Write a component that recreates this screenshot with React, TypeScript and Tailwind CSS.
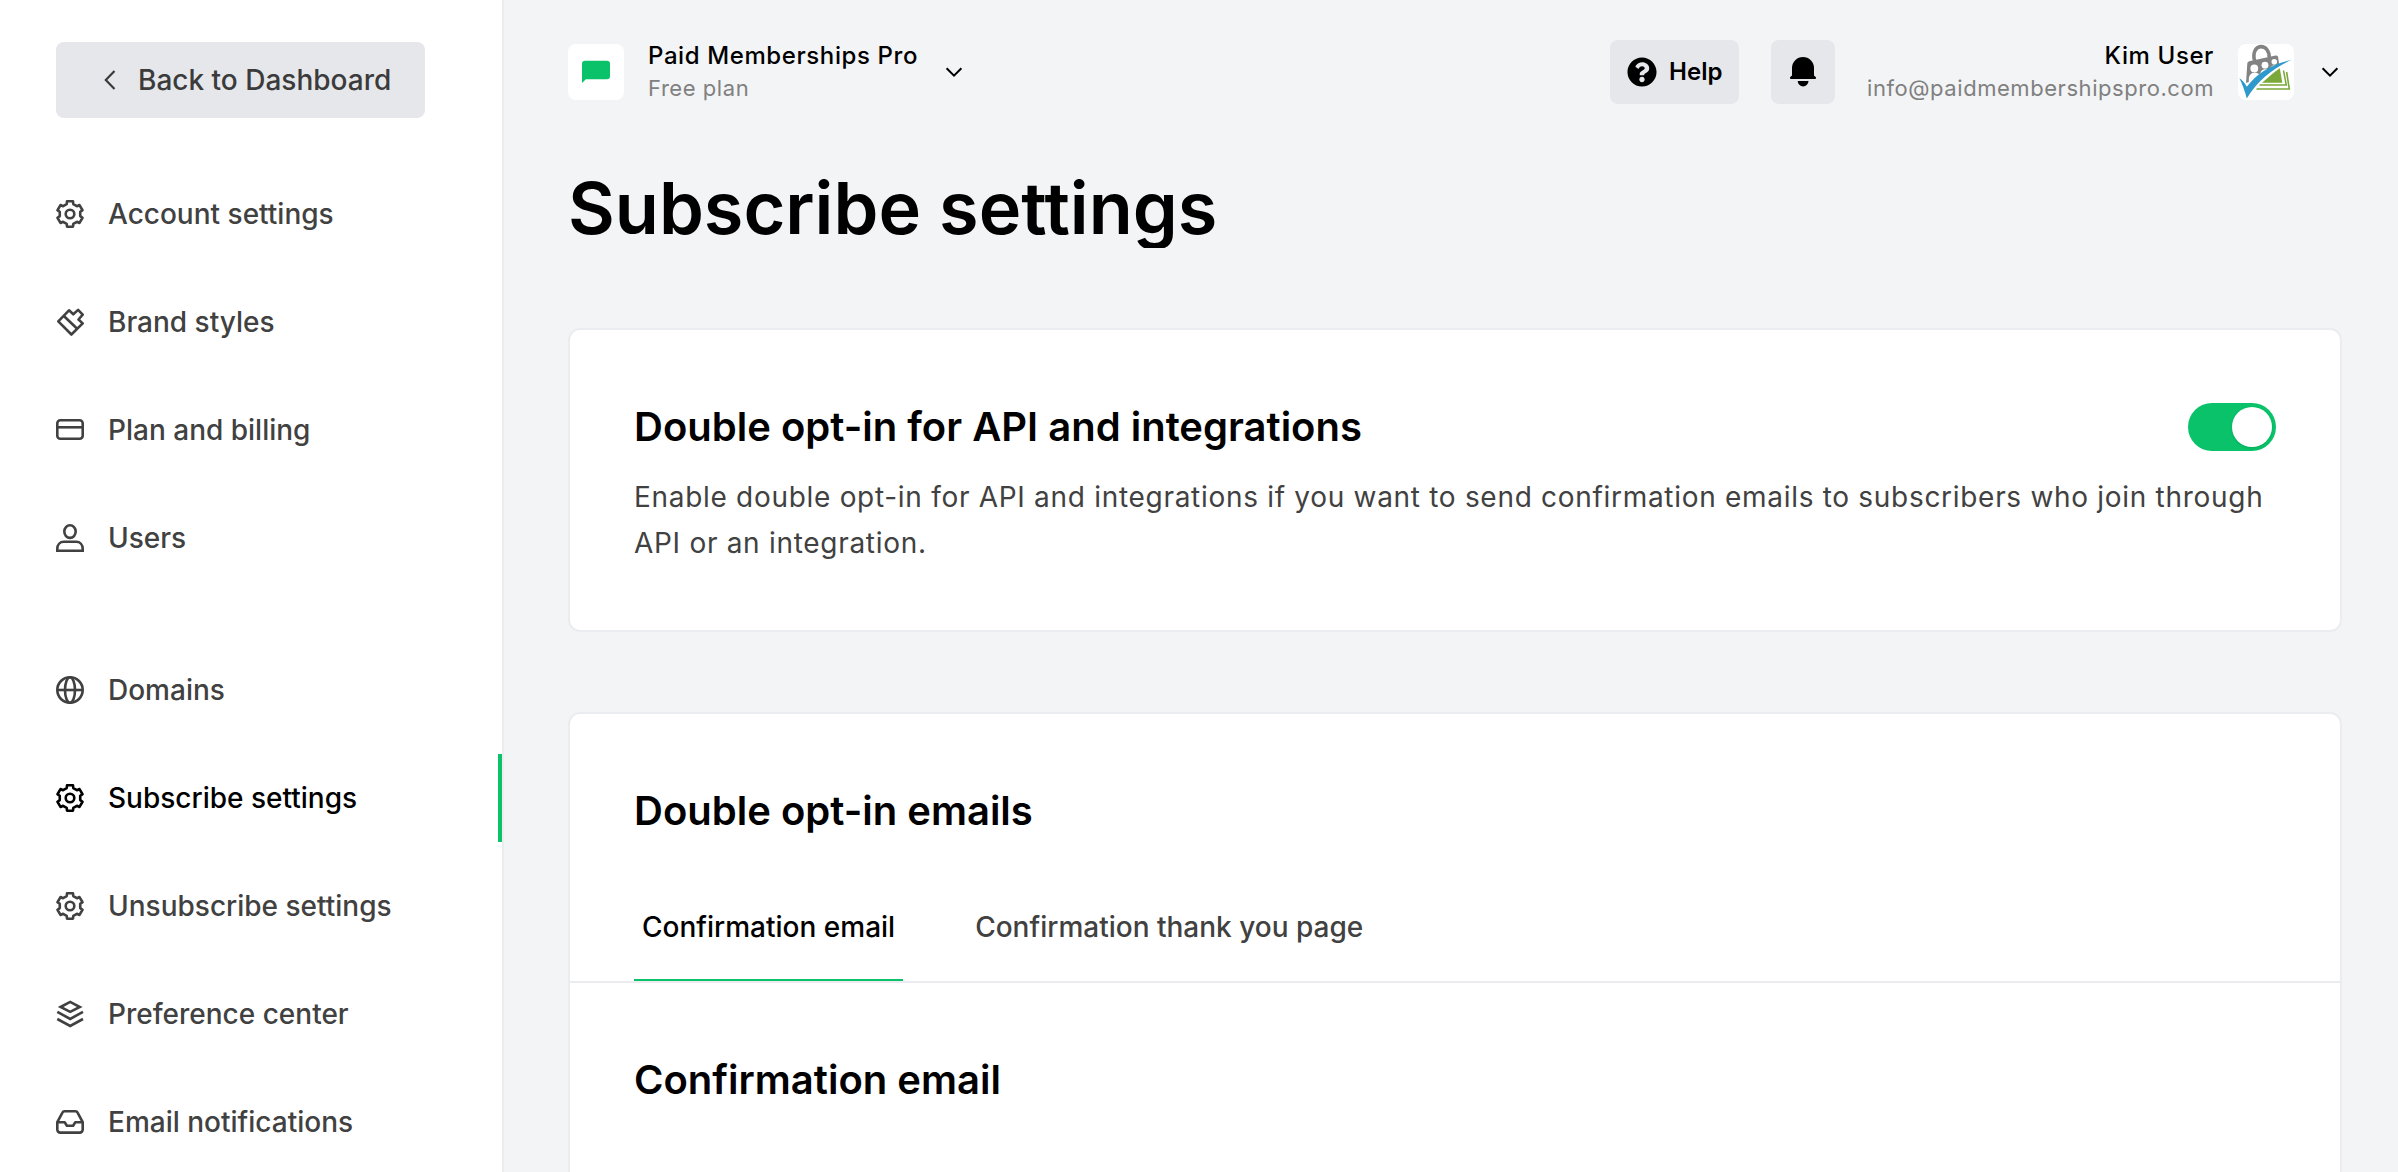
import clsx from 'clsx';
import { type ReactNode } from 'react';
import { FaQuestionCircle } from 'react-icons/fa';

type IconName = 'gear' | 'brush' | 'card' | 'user' | 'globe' | 'layers' | 'inbox';

interface NavItem {
    title: string;
    icon: IconName;
    active?: boolean;
}

const accountItems: NavItem[] = [
    { title: 'Account settings', icon: 'gear' },
    { title: 'Brand styles', icon: 'brush' },
    { title: 'Plan and billing', icon: 'card' },
    { title: 'Users', icon: 'user' },
];

const settingsItems: NavItem[] = [
    { title: 'Domains', icon: 'globe' },
    { title: 'Subscribe settings', icon: 'gear', active: true },
    { title: 'Unsubscribe settings', icon: 'gear' },
    { title: 'Preference center', icon: 'layers' },
    { title: 'Email notifications', icon: 'inbox' },
];

// six teeth, one every 60 degrees
const gearPath = (() => {
    const tooth = [
        [-3.3, -9.9],
        [-3, -12.7],
        [3, -12.7],
        [3.3, -9.9],
    ];
    const points: string[] = [];
    for (let i = 0; i < 6; i++) {
        const a = (i * Math.PI) / 3;
        tooth.forEach(([x, y]) => {
            const px = 14 + x * Math.cos(a) - y * Math.sin(a);
            const py = 14 + x * Math.sin(a) + y * Math.cos(a);
            points.push(`${px.toFixed(2)} ${py.toFixed(2)}`);
        });
    }
    return `M${points.join('L')}Z`;
})();

const icons: Record<IconName, ReactNode> = {
    gear: (
        <>
            <path d={gearPath} />
            <circle cx="14" cy="14" r="4.3" />
        </>
    ),
    brush: (
        <>
            <path d="M2.3 13.3 13 2.3l4.3 4 4.8-4.4 4.6 4.8-4.2 4.8 4.2 3.9L15.4 26.5Z" />
            <path d="m7.6 7.8 13.6 13" />
        </>
    ),
    card: (
        <>
            <rect x="1.3" y="4.3" width="25.4" height="18.5" rx="3" />
            <path d="M1.3 11.3h25.4" />
        </>
    ),
    user: (
        <>
            <ellipse cx="14" cy="7.6" rx="5.7" ry="6.3" />
            <path strokeLinejoin="miter" d="M1.3 26.7v-1.9c0-4 2.6-7 6.6-7h12.2c4 0 6.6 3 6.6 7v1.9Z" />
        </>
    ),
    globe: (
        <>
            <circle cx="14" cy="14" r="12.7" />
            <ellipse cx="14" cy="14" rx="5" ry="12.7" />
            <path d="M1.3 14h25.4" />
        </>
    ),
    layers: (
        <g strokeLinejoin="miter">
            <path d="M4.6 7 14.2 1.9l9.6 5.1-9.6 4.9Z" />
            <path d="m1.3 11.9 12.9 7 12.8-7" />
            <path d="m1.3 19 12.9 7L27 19" />
        </g>
    ),
    inbox: (
        <>
            <path d="M1.3 14.2 6.3 4.8a2.6 2.6 0 0 1 2.3-1.5h10.8a2.6 2.6 0 0 1 2.3 1.5l5 9.4v7.4a3 3 0 0 1-3 3H4.3a3 3 0 0 1-3-3Z" />
            <path d="M1.3 14.2h7.4l2.2 3.5h6.2l2.2-3.5h7.4" />
        </>
    ),
};

function Icon({ name }: { name: IconName }) {
    return (
        <svg className="size-7 shrink-0" viewBox="0 0 28 28" fill="none" stroke="currentColor" strokeWidth="2.6" strokeLinejoin="round">
            {icons[name]}
        </svg>
    );
}

function NavList({ items }: { items: NavItem[] }) {
    return (
        <nav className="flex flex-col gap-5">
            {items.map((item) => (
                <a
                    key={item.title}
                    className={clsx(
                        'flex h-[88px] items-center gap-6 border-r-4 pl-14 text-[28px] font-medium',
                        item.active ? 'border-[#09c269] text-black' : 'border-transparent text-[#414141]',
                    )}
                >
                    <Icon name={item.icon} />
                    {item.title}
                </a>
            ))}
        </nav>
    );
}

function ChevronDown() {
    return (
        <svg className="h-3 w-[18px]" viewBox="0 0 18 12" fill="none" stroke="currentColor" strokeWidth="2">
            <path d="m1.6 2.2 7.4 7.4 7.4-7.4" />
        </svg>
    );
}

function Avatar() {
    return (
        <svg className="size-14 rounded-lg bg-white" viewBox="0 0 56 56">
            <path d="M16.5 16.5c-2-8 1.2-13.6 6.2-13.9 5-.3 8.6 4.4 8.5 10.9" fill="none" stroke="#838383" strokeWidth="3.6" />
            <path d="M8 39 9.3 19.4q.2-1.9 2-2.2l26.2-5.6q2.2-.5 2.6 1.5l1.2 7.9C31 24.5 19 31 12.5 37.3Z" fill="#838383" />
            <g fill="#fff">
                <circle cx="16.3" cy="24.5" r="3.9" />
                <path d="M10.8 37.5c-.3-6 1.7-8.5 5.7-8.7 4 0 5.5 2 5.8 4.8L13 41Z" />
                <circle cx="27" cy="21.2" r="3.4" />
                <path d="M22 33.5c-.2-5.5 1.5-8 5-8.2 3.7 0 5 2 5.3 4Z" />
                <circle cx="36.3" cy="17.8" r="2.8" />
                <path d="M32 27.5c-.1-4 1.3-6 4.3-6.2 3.2 0 4.3 1.2 4.7 3Z" />
            </g>
            <path d="M24 38.8c5.5-5 11-9.8 17.8-14.6l2.5 14.6Z" fill="#7ba83a" />
            <path d="M45.5 26.5 48.3 41H21.5" fill="none" stroke="#7ba83a" strokeWidth="1.5" />
            <path d="M48.6 28 51.3 45H18.5" fill="none" stroke="#7ba83a" strokeWidth="1.6" />
            <path d="M1.3 34.3c3 1.8 5.5 4.5 7.5 8.5C18 30.5 32 20.5 53.7 15.8 36 24 20 36 8.8 54.5 6.8 47 4.3 40 1.3 34.3Z" fill="#3099cc" />
        </svg>
    );
}

function Card({ children }: { children: ReactNode }) {
    return <section className="rounded-xl border-2 border-[#ebecef] bg-white">{children}</section>;
}

function Sidebar() {
    return (
        <aside className="flex w-[504px] shrink-0 flex-col border-r-2 border-[#ebecef] bg-white pt-[42px]">
            <button className="ml-14 flex h-[76px] w-[369px] items-center rounded-lg bg-[#e6e7eb] pl-12 text-[28px] font-medium text-[#3b3b3b]">
                <svg className="mr-[22px] h-5 w-3" viewBox="0 0 12 20" fill="none" stroke="currentColor" strokeWidth="2.2">
                    <path d="M10.5 1 1.8 10l8.7 9" />
                </svg>
                Back to Dashboard
            </button>
            <div className="mt-[52px] flex flex-col gap-16">
                <NavList items={accountItems} />
                <NavList items={settingsItems} />
            </div>
        </aside>
    );
}

function Header() {
    return (
        <header className="flex h-16 items-center justify-between">
            <div className="flex items-center">
                <div className="flex size-14 items-center justify-center rounded-lg bg-white">
                    <svg className="h-6 w-7" viewBox="0 0 28 24">
                        <path d="M3 .7h22a3 3 0 0 1 3 3v12.6a3 3 0 0 1-3 3H3.8L0 23V3.7a3 3 0 0 1 3-3Z" fill="#09c269" />
                    </svg>
                </div>
                <div className="mr-[27px] ml-6">
                    <p className="text-2xl leading-8 font-medium tracking-wide text-black">Paid Memberships Pro</p>
                    <p className="text-[22px] leading-8 tracking-wide text-[#808080]">Free plan</p>
                </div>
                <ChevronDown />
            </div>
            <div className="flex items-center">
                <button className="flex h-16 w-[129px] items-center rounded-lg bg-[#e6e7eb] pl-[17px] text-2xl font-semibold">
                    <FaQuestionCircle className="mr-3 size-[30px]" />
                    Help
                </button>
                <button className="ml-8 flex size-16 items-center justify-center rounded-lg bg-[#e6e7eb]">
                    <svg className="h-[30px] w-[26px]" viewBox="0 0 26 30" fill="currentColor">
                        <path d="M2 18.5V11a11 11 0 0 1 22 0v7.5l1.7 1.6a1 1 0 0 1-.7 1.8H1a1 1 0 0 1-.7-1.8ZM7.7 24h10.8a5.4 5.4 0 0 1-10.8 0Z" />
                    </svg>
                </button>
                <div className="mr-6 ml-8 text-right">
                    <p className="text-2xl leading-8 font-medium tracking-wide text-black">Kim User</p>
                    <p className="text-[22px] leading-8 tracking-wide text-[#808080]">info@paidmembershipspro.com</p>
                </div>
                <Avatar />
                <div className="mr-[3px] ml-[27px]">
                    <ChevronDown />
                </div>
            </div>
        </header>
    );
}

export default function App() {
    return (
        <div className="flex h-[1172px] overflow-hidden bg-[#f3f4f6] font-['Inter',sans-serif]">
            <Sidebar />
            <main className="flex flex-1 flex-col pt-10 pr-14 pl-16">
                <Header />
                <h1 className="mt-16 h-20 shrink-0 overflow-hidden text-7xl leading-[80px] font-semibold text-black">Subscribe settings</h1>
                <div className="mt-20 flex flex-col gap-20">
                    <Card>
                        <div className="p-16">
                            <div className="flex h-16 items-center justify-between">
                                <h2 className="pt-0.5 text-[40px] leading-[64px] font-semibold text-black">Double opt-in for API and integrations</h2>
                                <button role="switch" aria-checked="true" className="mt-0.5 flex h-12 w-[88px] items-center justify-end rounded-full bg-[#09c269] p-1">
                                    <span className="size-10 rounded-full bg-white shadow" />
                                </button>
                            </div>
                            <p className="mt-4 text-[28px] leading-[46px] tracking-wide text-[#414141]">
                                Enable double opt-in for API and integrations if you want to send confirmation emails to subscribers who join through
                                API or an integration.
                            </p>
                        </div>
                    </Card>
                    <Card>
                        <h2 className="px-16 pt-[65px] text-[40px] leading-[64px] font-semibold text-black">Double opt-in emails</h2>
                        <div className="mt-[31px] flex gap-16 border-b-2 border-[#ebecef] px-16 text-[28px] font-medium">
                            <button className="h-[107px] border-b-2 border-[#09c269] px-2 text-black">Confirmation email</button>
                            <button className="h-[107px] border-b-2 border-transparent px-2 text-[#414141]">Confirmation thank you page</button>
                        </div>
                        <h2 className="h-[400px] px-16 pt-[65px] text-[40px] leading-[64px] font-semibold text-black">Confirmation email</h2>
                    </Card>
                </div>
            </main>
        </div>
    );
}
